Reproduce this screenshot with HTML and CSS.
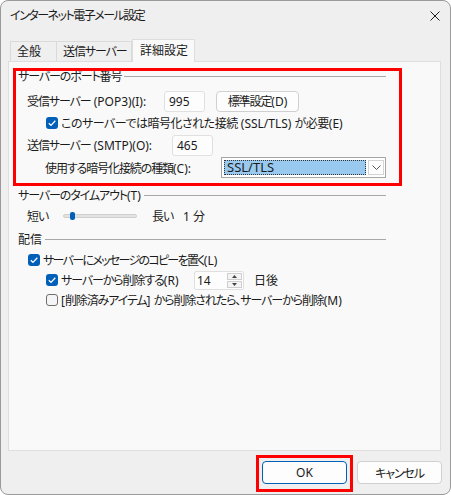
FILE: index.html
```html
<!DOCTYPE html>
<html lang="ja">
<head>
<meta charset="utf-8">
<title>インターネット電子メール設定</title>
<link rel="stylesheet" href="styles.css">
</head>
<body>
<div class="window">
  <div class="titlebar">
    <span class="title">インターネット電子メール設定</span>
    <svg class="close" width="10" height="10" viewBox="0 0 10 10"><path d="M0.5 0.5L9.5 9.5M9.5 0.5L0.5 9.5" stroke="#1b1b1b" stroke-width="1" fill="none"/></svg>
  </div>
  <div class="tabs">
    <div class="tab t1">全般</div>
    <div class="tab t2"><span class="k">送信サーバー</span></div>
    <div class="tab t3 active">詳細設定</div>
  </div>
  <div class="panel">
    <div class="group hl">
      <div class="ghead"><span class="k">サーバーのポート番号</span><i class="rule"></i></div>
      <div class="row r1">
        <span class="lbl lw1"><span class="k">受信サーバー</span> (POP3)(I):</span>
        <div class="input">995</div>
        <div class="btn std"><span class="k">標準設定</span>(D)</div>
      </div>
      <div class="row r2">
        <span class="cb on"><svg width="12" height="12" viewBox="0 0 12 12"><path d="M2.8 6.2L5 8.4L9.3 3.8" stroke="#fff" stroke-width="1.3" fill="none"/></svg></span>
        <span><span class="k3">このサーバーでは暗号化された接続</span> (SSL/TLS) <span class="k3">が必要</span>(E)</span>
      </div>
      <div class="row r3">
        <span class="lbl lw3"><span class="k">送信サーバー</span> (SMTP)(O):</span>
        <div class="input">465</div>
      </div>
      <div class="row r4">
        <span class="lbl lw4"><span class="k">使用する暗号化接続の種類</span>(C):</span>
        <div class="select">
          <span class="opt">SSL/TLS</span>
          <span class="dd"><svg width="9" height="5" viewBox="0 0 9 5"><path d="M0.5 0.5L4.5 4.5L8.5 0.5" stroke="#555" stroke-width="1" fill="none"/></svg></span>
        </div>
      </div>
    </div>

    <div class="group g2">
      <div class="ghead"><span><span class="k">サーバーのタイムアウト</span>(T)</span><i class="rule"></i></div>
      <div class="row rs">
        <span class="sl-lbl k">短い</span>
        <div class="track"><span class="thumb"></span></div>
        <span class="sl-long k">長い</span>
        <span>1 分</span>
      </div>
    </div>

    <div class="group g3">
      <div class="ghead"><span>配信</span><i class="rule"></i></div>
      <div class="row rl">
        <span class="cb on"><svg width="12" height="12" viewBox="0 0 12 12"><path d="M2.8 6.2L5 8.4L9.3 3.8" stroke="#fff" stroke-width="1.3" fill="none"/></svg></span>
        <span><span class="k2">サーバーにメッセージのコピーを置く</span>(L)</span>
      </div>
      <div class="row rr">
        <span class="cb on"><svg width="12" height="12" viewBox="0 0 12 12"><path d="M2.8 6.2L5 8.4L9.3 3.8" stroke="#fff" stroke-width="1.3" fill="none"/></svg></span>
        <span class="lbl lwr"><span class="k">サーバーから削除する</span>(R)</span>
        <div class="spin">
          <span class="spin-val">14</span>
          <span class="spin-btns">
            <span class="sb"><svg width="5" height="3" viewBox="0 0 5 3"><path d="M0 3L2.5 0L5 3Z" fill="#444"/></svg></span>
            <span class="sb"><svg width="5" height="3" viewBox="0 0 5 3"><path d="M0 0L2.5 3L5 0Z" fill="#444"/></svg></span>
          </span>
        </div>
        <span class="days">日後</span>
      </div>
      <div class="row rm">
        <span class="cb"></span>
        <span>[<span class="k">削除済みアイテム</span>] <span class="k">から削除されたら、サーバーから削除</span>(M)</span>
      </div>
    </div>
  </div>
  <div class="footer">
    <div class="hlbox"><div class="btn ok">OK</div></div>
    <div class="btn cancel"><span class="k">キャンセル</span></div>
  </div>
</div>
</body>
</html>
```

FILE: styles.css
```css
* { box-sizing: border-box; }
html, body { margin: 0; padding: 0; background: #ffffff; }
body {
  font-family: "Noto Sans", "Noto Sans CJK JP", sans-serif;
  font-size: 12px;
  color: #1b1b1b;
  font-feature-settings: "palt";
  white-space: nowrap;
}
.k { letter-spacing: -1.1px; }
.k2 { letter-spacing: -1.7px; }
.k3 { letter-spacing: -0.5px; }

.window {
  width: 451px;
  height: 495px;
  border: 1px solid #9a9a9a;
  border-radius: 8px;
  background: #efefef;
  overflow: hidden;
  display: flex;
  flex-direction: column;
}
.titlebar {
  height: 29px;
  flex: none;
  display: flex;
  align-items: center;
  justify-content: space-between;
  padding: 0 10px 0 9px;
}
.title { line-height: 16px; letter-spacing: -1.5px; }

.tabs {
  flex: none;
  height: 22px;
  margin: 9px 0 0 9px;
  display: flex;
  align-items: flex-end;
  position: relative;
  z-index: 1;
}
.tab {
  height: 20px;
  line-height: 19px;
  padding-left: 6px;
  border: 1px solid #dadada;
  border-bottom: none;
  background: #efefef;
}
.t1 { width: 47px; }
.t2 { width: 75px; border-left: none; }
.t3 { width: 63px; }
.tab.active {
  height: 23px;
  line-height: 22px;
  padding-left: 7px;
  margin-bottom: -1px;
  background: #f9f9f9;
  border-color: #dedede;
}

.panel {
  flex: none;
  height: 390px;
  margin: 0 9px 0 7px;
  border: 1px solid #dedede;
  background: #f9f9f9;
  padding-top: 9px;
}

.group { margin-left: 9px; width: 368px; }
.group.hl {
  margin-left: 7px;
  width: 383px;
  padding: 0 13px 5px 2px;
  outline: 3px solid #ff0000;
}
.ghead {
  display: flex;
  align-items: center;
  height: 14px;
  line-height: 14px;
}
.hl .ghead { height: 12px; line-height: 12px; }
.ghead .rule {
  flex: 1;
  height: 1px;
  background: #a8a8a8;
  margin-left: 3px;
  margin-top: -2px;
}

.row { display: flex; align-items: center; }
.lbl { flex: none; }

.r1 { margin-top: 7px; height: 22px; padding-left: 9px; }
.lw1 { width: 137px; }
.r2 { margin-top: 4px; height: 14px; padding-left: 28px; }
.r3 { margin-top: 4px; height: 22px; padding-left: 9px; }
.lw3 { width: 145px; }
.r4 { margin-top: 1px; height: 21px; padding-left: 27px; }
.lw4 { width: 176px; }

.input {
  width: 41px;
  height: 21px;
  border: 1px solid #e0e0e0;
  border-radius: 3px;
  background: #fdfdfd;
  padding-left: 4px;
  line-height: 19px;
}
.btn {
  height: 21px;
  border: 1px solid #d0d0d0;
  border-radius: 4px;
  background: #fdfdfd;
  display: flex;
  align-items: center;
  justify-content: center;
}
.std { width: 83px; margin-left: 11px; }

.cb {
  flex: none;
  width: 12px;
  height: 12px;
  border-radius: 3px;
  border: 1px solid #6f6f6f;
  background: #f5f5f5;
  margin-right: 3px;
  display: flex;
}
.cb.on { border: none; background: #005fb8; }

.select {
  width: 166px;
  height: 21px;
  border: 1px solid #a6a6a6;
  background: #ffffff;
  padding: 2px 1px 2px 2px;
  display: flex;
}
.opt {
  flex: 1;
  background: #99c9ef;
  outline: 1px dotted #333;
  outline-offset: -1px;
  font-size: 13px;
  line-height: 15px;
  padding-left: 3px;
}
.dd {
  width: 16px;
  margin-left: 2px;
  border: 1px solid #d4d4d4;
  background: #ffffff;
  display: flex;
  align-items: center;
  justify-content: center;
}

.g2 .ghead { margin-top: 6px; }
.rs { margin-top: 6px; height: 14px; padding-left: 9px; }
.sl-lbl { width: 36px; flex: none; }
.track {
  position: relative;
  width: 74px;
  height: 4px;
  background: #e2e2e2;
  border: 1px solid #cfcfcf;
  border-radius: 2px;
}
.thumb {
  position: absolute;
  left: 6px;
  top: -3px;
  width: 5px;
  height: 8px;
  border-radius: 2px;
  background: #005fb8;
}
.sl-long { margin-left: 15px; width: 31px; }

.g3 .ghead { margin-top: 10px; }
.rl { margin-top: 6px; height: 14px; padding-left: 10px; }
.rr { margin-top: 3px; height: 20px; padding-left: 28px; }
.lwr { width: 133px; }
.rm { margin-top: 3px; height: 14px; padding-left: 28px; }

.spin {
  width: 50px;
  height: 19px;
  border: 1px solid #e0e0e0;
  border-radius: 2px;
  background: #fdfdfd;
  display: flex;
  align-items: stretch;
}
.spin-val { flex: 1; padding-left: 2px; line-height: 17px; }
.spin-btns {
  width: 15px;
  margin: 1px 1px 1px 0;
  display: flex;
  flex-direction: column;
  gap: 1px;
}
.sb {
  flex: 1;
  border: 1px solid #cfcfcf;
  background: #f4f4f4;
  display: flex;
  align-items: center;
  justify-content: center;
}
.days { margin-left: 10px; }

.footer {
  flex: none;
  display: flex;
  justify-content: flex-end;
  align-items: flex-start;
  padding: 4px 8px 0 0;
}
.hlbox {
  border: 3px solid #ff0000;
  padding: 3px 3px 5px 3px;
  margin-right: 4px;
}
.ok { width: 85px; height: 23px; border-color: #005fb8; }
.cancel { width: 85px; height: 23px; margin-top: 6px; }
```
